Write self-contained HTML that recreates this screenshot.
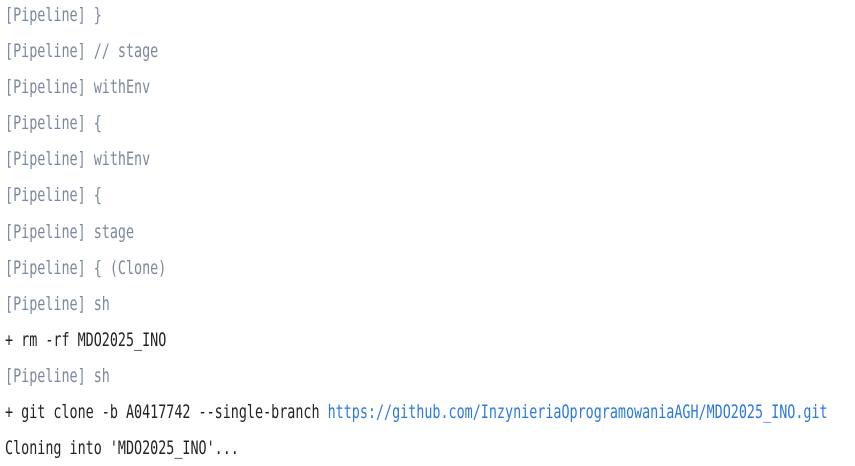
<!DOCTYPE html>
<html><head><meta charset="utf-8"><style>
html,body{margin:0;padding:0;background:#fff;width:855px;height:462px;overflow:hidden}
.w{position:absolute;left:5px;top:-3px;transform:scaleX(0.705);transform-origin:0 0;white-space:pre;font-family:"DejaVu Sans Mono","Liberation Mono",monospace;font-size:19px;line-height:36.1px;color:#222}
.p{color:#7b889e}
a{color:#2a78e0;text-decoration:none}
</style></head><body><div class="w"><div class="p">[Pipeline] }</div><div class="p">[Pipeline] // stage</div><div class="p">[Pipeline] withEnv</div><div class="p">[Pipeline] {</div><div class="p">[Pipeline] withEnv</div><div class="p">[Pipeline] {</div><div class="p">[Pipeline] stage</div><div class="p">[Pipeline] { (Clone)</div><div class="p">[Pipeline] sh</div><div>+ rm -rf MDO2025_INO</div><div class="p">[Pipeline] sh</div><div>+ git clone -b A0417742 --single-branch <a>https://github.com/InzynieriaOprogramowaniaAGH/MDO2025_INO.git</a></div><div>Cloning into 'MDO2025_INO'...</div></div></body></html>
